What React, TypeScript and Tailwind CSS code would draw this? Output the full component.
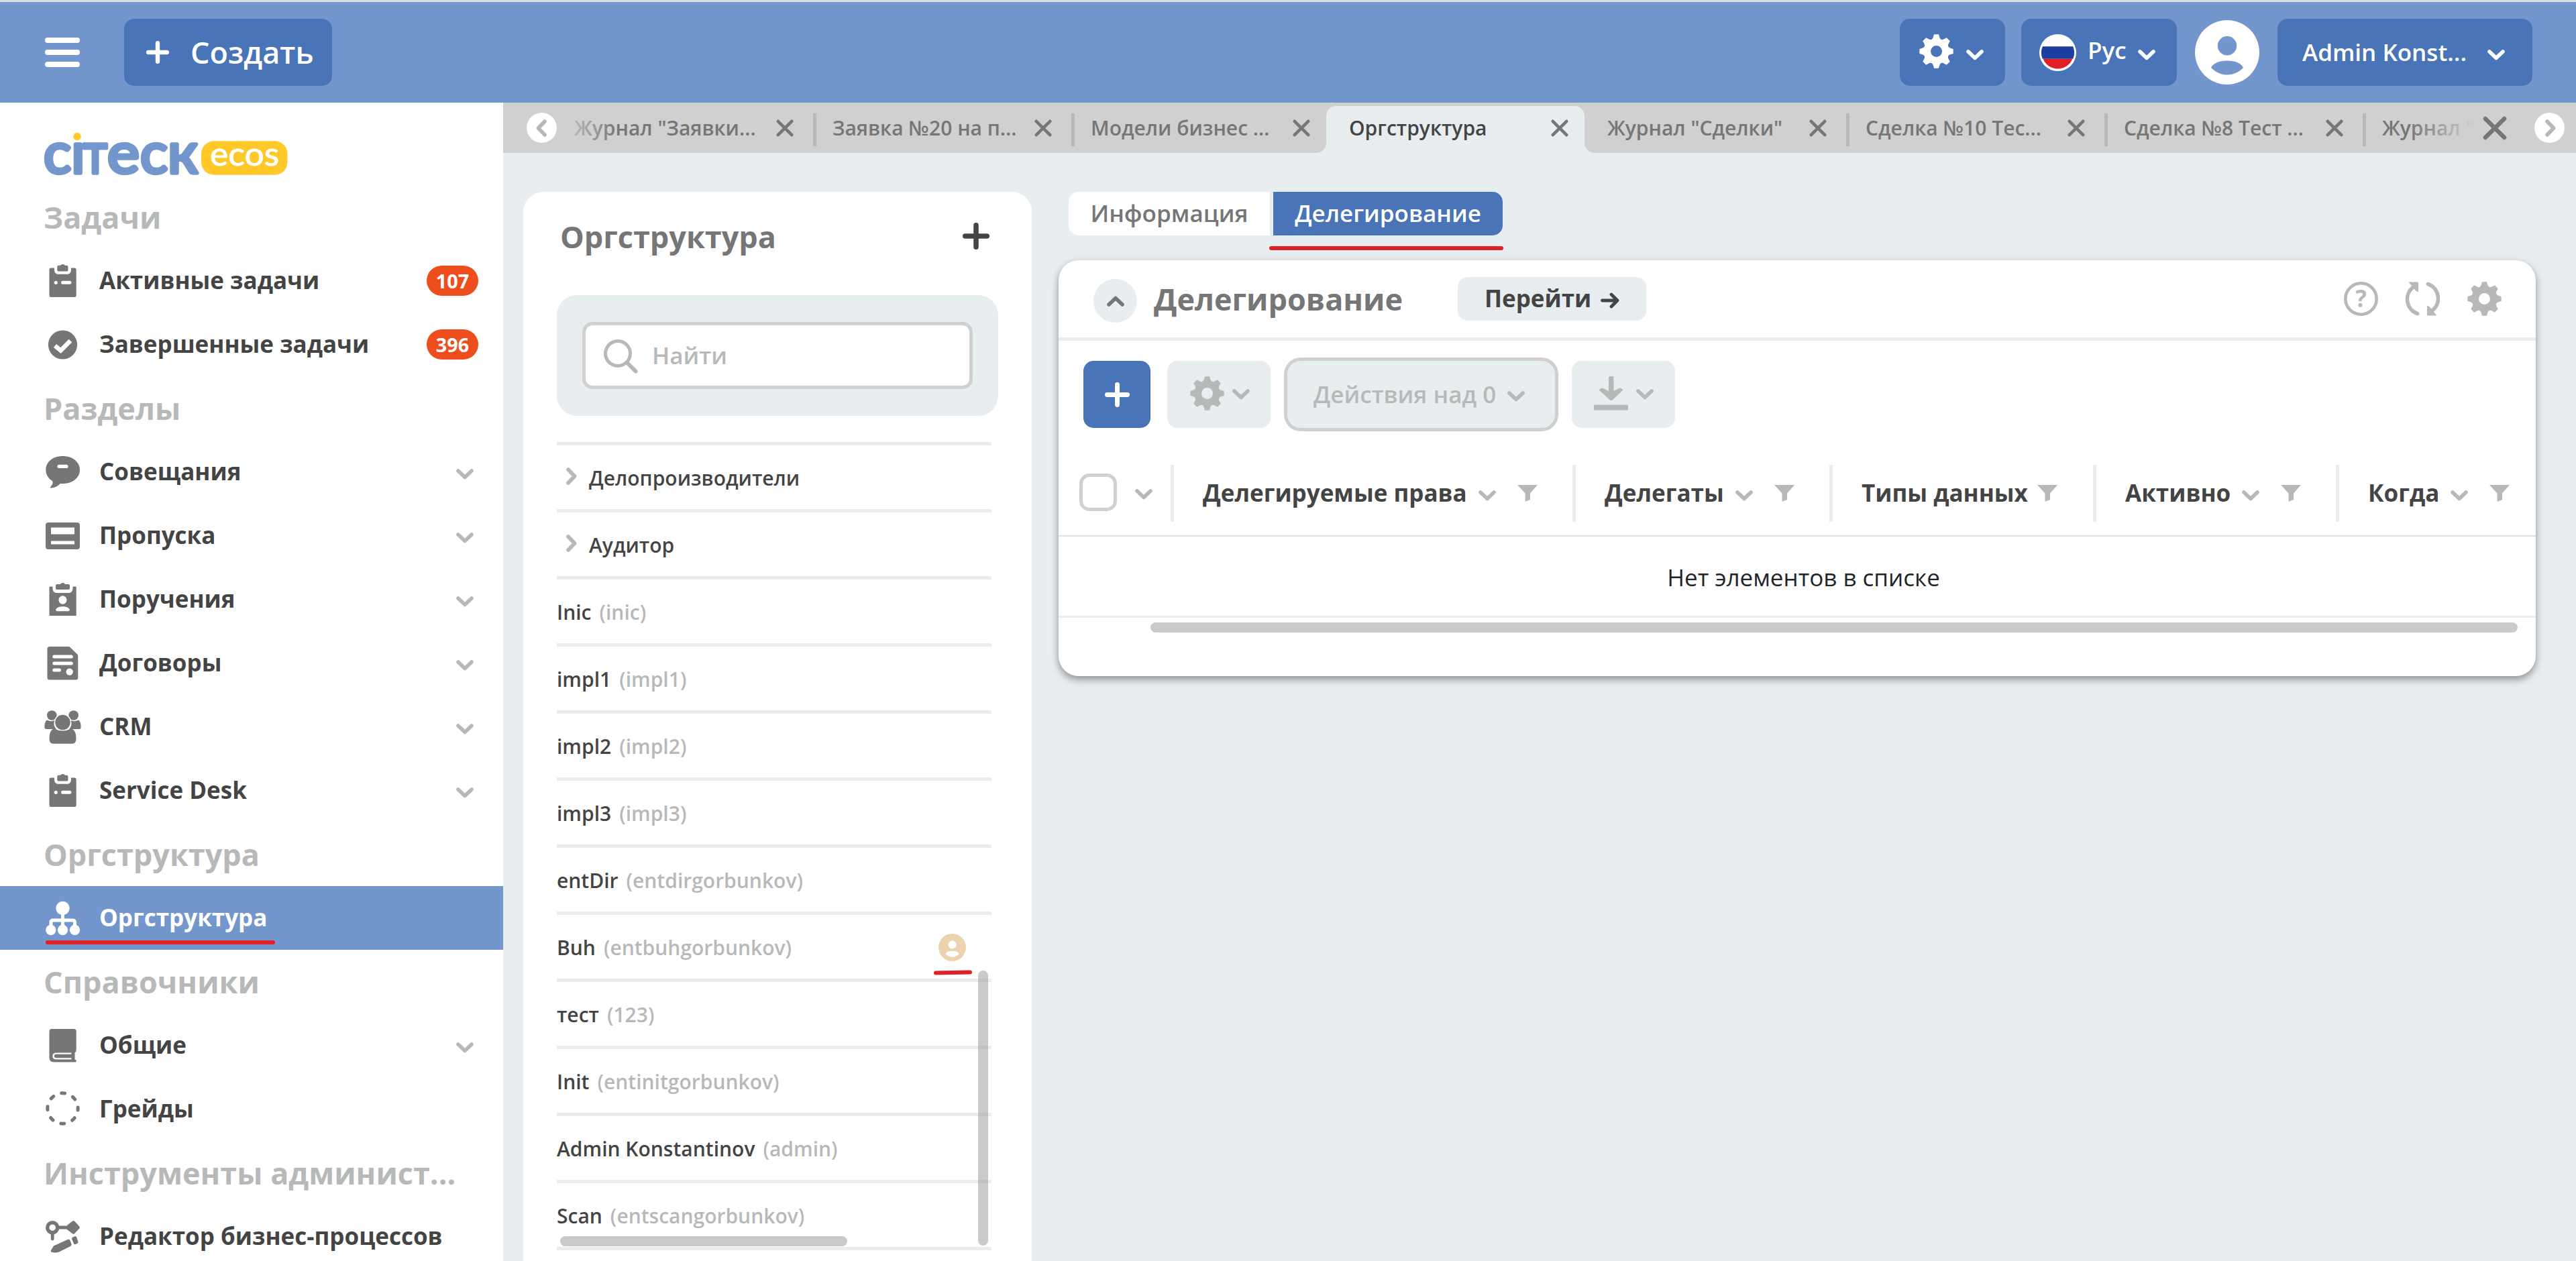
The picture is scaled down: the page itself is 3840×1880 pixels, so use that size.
import React from "react";
import clsx from "clsx";

interface IconProps {
  className?: string;
}

interface MenuEntry {
  title: string;
  icon?: React.FC<IconProps>;
  badge?: number;
  expandable?: boolean;
  active?: boolean;
}

interface Person {
  name: string;
  login?: string;
  delegated?: boolean;
}

interface Column {
  title: string;
  width: string;
  sortable?: boolean;
}

/* ---------- icons ---------- */

const Chevron: React.FC<IconProps> = ({ className }) => (
  <svg viewBox="0 0 26 16" className={clsx("h-[16px] w-[26px] shrink-0", className)} fill="none" stroke="currentColor" strokeWidth="5.6" strokeLinecap="round" strokeLinejoin="round">
    <path d="M3 3 13 12.6 23 3" />
  </svg>
);

const Cross: React.FC<IconProps> = ({ className }) => (
  <svg viewBox="0 0 26 26" className={clsx("shrink-0", className)} fill="none" stroke="currentColor" strokeWidth="4.6" strokeLinecap="round">
    <path d="M2.8 2.8 23.2 23.2M23.2 2.8 2.8 23.2" />
  </svg>
);

const Plus: React.FC<IconProps> = ({ className }) => (
  <svg viewBox="0 0 34 34" className={clsx("shrink-0", className)} fill="none" stroke="currentColor" strokeWidth="6.4" strokeLinecap="round">
    <path d="M17 3.2V30.8M3.2 17H30.8" />
  </svg>
);

// eight teeth, every 45 degrees
const gearPath = (() => {
  const point = (r: number, deg: number) => {
    const a = ((deg - 90) * Math.PI) / 180;
    return `${(25.5 + r * Math.cos(a)).toFixed(2)} ${(25.5 + r * Math.sin(a)).toFixed(2)}`;
  };
  let d = "";
  for (let i = 0; i < 8; i++) {
    const deg = i * 45;
    d += `${i === 0 ? "M" : "L"}${point(22, deg - 12)}L${point(25.4, deg - 8)}L${point(25.4, deg + 8)}L${point(22, deg + 12)}Q${point(16.5, deg + 22.5)} ${point(22, deg + 33)}`;
  }
  return `${d}ZM17 25.5a8.5 8.5 0 1 0 17 0a8.5 8.5 0 1 0-17 0Z`;
})();

const Gear: React.FC<IconProps> = ({ className }) => (
  <svg viewBox="0 0 51 51" className={clsx("size-[51px] shrink-0", className)} fill="currentColor" fillRule="evenodd">
    <path d={gearPath} />
  </svg>
);

const Filter: React.FC<IconProps> = ({ className }) => (
  <svg viewBox="0 0 30 25" className={clsx("h-[25px] w-[30px] shrink-0 text-[#b7b9b9]", className)} fill="currentColor">
    <path d="M0 0H30L19 12.5V22L11.5 25V12.5Z" />
  </svg>
);

const MenuSvg: React.FC<{ children: React.ReactNode }> = ({ children }) => (
  <svg viewBox="0 0 51 50" className="h-[50px] w-[51px] shrink-0 overflow-visible" fill="currentColor">
    {children}
  </svg>
);

const TaskIcon: React.FC<IconProps> = () => (
  <MenuSvg>
    <path d="M8 5.5H13V8C13 12 15 14.8 19 14.8H32C36 14.8 38 12 38 8V5.5H43Q45.7 5.5 45.7 8.5V46Q45.7 49 43 49H8Q5.5 49 5.5 46V8.5Q5.5 5.5 8 5.5Z" />
    <path d="M19 1.8H22Q22.6 0 25.5 0T29 1.8H31Q33.5 1.8 33.5 4V8Q33.5 10.6 31 10.6H20Q17.3 10.6 17.3 8V4Q17.3 1.8 19 1.8Z" />
    <circle cx="15.3" cy="27.3" r="2.6" fill="#fff" />
    <rect x="23" y="24.8" width="15.4" height="5" rx="2.5" fill="#fff" />
  </MenuSvg>
);

const DoneIcon: React.FC<IconProps> = () => (
  <MenuSvg>
    <circle cx="25.5" cy="25" r="21.6" />
    <path d="M14 26.5 22.5 33.5 37 19" fill="none" stroke="#fff" strokeWidth="6.6" />
  </MenuSvg>
);

const MeetingIcon: React.FC<IconProps> = () => (
  <MenuSvg>
    <path d="M25.5 1C40 1 51 9.5 51 21.5S40 42 25.5 42L22 42C17.5 46.5 12 49 7 48.5C6.3 48 7 47.5 8 46C10 43.5 11.5 41 10 38C4 34.5 .3 28.5 .3 21.5C.3 9.5 11 1 25.5 1Z" />
    <rect x="17.5" y="13.8" width="16" height="5.2" rx="2.6" fill="#fff" />
  </MenuSvg>
);

const PassIcon: React.FC<IconProps> = () => (
  <MenuSvg>
    <path fillRule="evenodd" d="M4 5H47Q51 5 51 9V41Q51 45 47 45H4Q0 45 0 41V9Q0 5 4 5ZM8 12.5V22.5H43V12.5ZM8 32.5V37.5H43V32.5Z" />
  </MenuSvg>
);

const OrderIcon: React.FC<IconProps> = () => (
  <MenuSvg>
    <path d="M6 5.5H10.5V8C10.5 12.5 13 15 17 15H34C38 15 40.5 12.5 40.5 8V5.5H45.2L45.7 6V48.5L45.2 49H6L5.5 48.5V6Z" />
    <path d="M17 2H22Q22.6 0 25.5 0T29 2H34Q36 2 36 4V8Q36 10 34 10H17Q15 10 15 8V4Q15 2 17 2Z" />
    <ellipse cx="25.5" cy="25.5" rx="6" ry="6.2" fill="#fff" />
    <path d="M15.2 39.5C17 36.5 21 35.2 25.5 35.2S34 36.5 35.8 39.5Q36 42.2 33.5 42.2H17.5Q15 42.2 15.2 39.5Z" fill="#fff" />
  </MenuSvg>
);

const ContractIcon: React.FC<IconProps> = () => (
  <MenuSvg>
    <path d="M6 0H34.5Q36 0 37 1.5L47.3 11.5Q48.3 12.5 48.3 14V46Q48.3 49.5 45 49.5H6Q2.5 49.5 2.5 46V3.5Q2.5 0 6 0Z" />
    <g fill="#fff">
      <rect x="10.2" y="12.6" width="30.6" height="5" rx="2.5" />
      <rect x="10.2" y="22.6" width="30.6" height="5" rx="2.5" />
      <rect x="10.2" y="32.6" width="12.8" height="5" rx="2.5" />
      <circle cx="35.7" cy="37.6" r="5.2" />
    </g>
  </MenuSvg>
);

const CrmIcon: React.FC<IconProps> = () => (
  <MenuSvg>
    <circle cx="9.3" cy="7.5" r="7.3" />
    <circle cx="41.7" cy="7.5" r="7.3" />
    <path d="M2 14.5Q9 18 14 14.5C11 20 13 25 16 28H1Q-1.8 28-1.6 24Q-1.5 17 2 14.5Z" />
    <path d="M49 14.5Q42 18 37 14.5C40 20 38 25 35 28H50Q52.8 28 52.6 24Q52.5 17 49 14.5Z" />
    <circle cx="25.5" cy="18" r="12" stroke="#fff" strokeWidth="1.5" />
    <path d="M13 27.2Q25.5 34 38 27.2Q45.5 29 45.5 42Q45.5 49.8 40 49.8H11Q5.5 49.8 5.5 42Q5.5 29 13 27.2Z" />
  </MenuSvg>
);

const OrgIcon: React.FC<IconProps> = () => (
  <MenuSvg>
    <circle cx="25.5" cy="10" r="10.2" />
    <path d="M25.5 18V38M8 37V31Q8 28 11 28H40Q43.5 28 43.5 31V37" fill="none" stroke="currentColor" strokeWidth="5" />
    <circle cx="7.8" cy="42.5" r="7.7" />
    <circle cx="25.5" cy="42.5" r="7.7" />
    <circle cx="43.5" cy="42.5" r="7.7" />
  </MenuSvg>
);

const BookIcon: React.FC<IconProps> = () => (
  <MenuSvg>
    <path d="M9.5 0H42Q45.7 0 45.7 3.5V31Q45.7 34 43.5 35.5V46H45Q45.7 46 45.7 47.5T45 49.5H12.5Q5.5 49.5 5.5 42.5V4Q5.5 0 9.5 0Z" />
    <path d="M38.5 36.6H16Q11.6 36.6 11.6 40.5T16 44.4H38.5" fill="none" stroke="#fff" strokeWidth="2.4" />
  </MenuSvg>
);

const DashedIcon: React.FC<IconProps> = () => (
  <MenuSvg>
    <circle cx="25.5" cy="23.5" r="22.7" fill="none" stroke="currentColor" strokeWidth="5" strokeLinecap="round" strokeDasharray="5 12.829" strokeDashoffset="2.5" />
  </MenuSvg>
);

const BpmIcon: React.FC<IconProps> = () => (
  <MenuSvg>
    <circle cx="10.2" cy="11.2" r="7.5" fill="none" stroke="currentColor" strokeWidth="5.4" />
    <path d="M19 11H34M10.2 20V28" fill="none" stroke="currentColor" strokeWidth="4.8" strokeLinecap="round" />
    <path d="M40 1.5Q41.5.5 43 1.5L50.5 9.8Q51.2 11 50.5 12.2L43 20.3Q41.5 21.3 40 20.3L31.8 14V8Z" />
    <path d="M12 38.5 34 28.5Q36 28.5 36.5 30.5L38.7 36Q38.7 38 37 39L20 47.5Q14 49.5 8.5 47.5Q7.2 46.5 8 45Z" />
    <path d="M39.5 26 44 24Q45.8 24 46.2 25.5L48.5 32.5Q48.5 34 47 35L44 36.3Q42.5 36.3 42 35L39 28Z" />
  </MenuSvg>
);

const UserIcon: React.FC<IconProps> = ({ className }) => (
  <svg viewBox="0 0 96 96" className={clsx("shrink-0", className)} fill="currentColor" fillRule="evenodd">
    <path d="M48 0A48 48 0 1 1 48 96A48 48 0 1 1 48 0ZM48 24A14 14 0 1 0 48 52.5A14 14 0 1 0 48 24ZM24 71C30 77 38 81.5 48 81.5S66 77 72 71C69 64 60 60.5 48 60.5S27 64 24 71Z" />
  </svg>
);

const Logo = () => (
  <svg viewBox="0 0 370 70" className="h-[70px] w-[370px] overflow-visible">
    <g fill="#7396cd" stroke="#7396cd" strokeWidth="5.6" strokeLinejoin="round" strokeLinecap="round" className="font-[Lato] text-[86px]">
      <text y="62" x="1" textLength="41" lengthAdjust="spacingAndGlyphs">c</text>
      <text y="62" x="42">ı</text>
      <text y="62" x="60" textLength="36" lengthAdjust="spacingAndGlyphs">т</text>
      <text y="62" x="96" textLength="48" lengthAdjust="spacingAndGlyphs">e</text>
      <text y="62" x="145" textLength="41" lengthAdjust="spacingAndGlyphs">c</text>
      <text y="62" x="186" textLength="45" lengthAdjust="spacingAndGlyphs">к</text>
    </g>
    <circle cx="51" cy="7.5" r="5.7" fill="#ffc929" />
    <rect x="236" y="14.3" width="128.5" height="50.5" rx="19" fill="#ffc929" />
    <text x="249" y="51" textLength="103" lengthAdjust="spacingAndGlyphs" fill="#fff" stroke="#fff" strokeWidth="1" className="font-[Lato] text-[49px]">
      ecos
    </text>
  </svg>
);

/* ---------- data ---------- */

const menu: MenuEntry[] = [
  { title: "Задачи" },
  { title: "Активные задачи", icon: TaskIcon, badge: 107 },
  { title: "Завершенные задачи", icon: DoneIcon, badge: 396 },
  { title: "Разделы" },
  { title: "Совещания", icon: MeetingIcon, expandable: true },
  { title: "Пропуска", icon: PassIcon, expandable: true },
  { title: "Поручения", icon: OrderIcon, expandable: true },
  { title: "Договоры", icon: ContractIcon, expandable: true },
  { title: "CRM", icon: CrmIcon, expandable: true },
  { title: "Service Desk", icon: TaskIcon, expandable: true },
  { title: "Оргструктура" },
  { title: "Оргструктура", icon: OrgIcon, active: true },
  { title: "Справочники" },
  { title: "Общие", icon: BookIcon, expandable: true },
  { title: "Грейды", icon: DashedIcon },
  { title: "Инструменты админист..." },
  { title: "Редактор бизнес-процессов", icon: BpmIcon },
];

const tabs = [
  'Журнал "Заявки...',
  "Заявка №20 на п...",
  "Модели бизнес ...",
  "Оргструктура",
  'Журнал "Сделки"',
  "Сделка №10 Тес...",
  "Сделка №8 Тест ...",
  'Журнал "',
];
const activeTab = 3;

const people: Person[] = [
  { name: "Делопроизводители" },
  { name: "Аудитор" },
  { name: "Inic", login: "inic" },
  { name: "impl1", login: "impl1" },
  { name: "impl2", login: "impl2" },
  { name: "impl3", login: "impl3" },
  { name: "entDir", login: "entdirgorbunkov" },
  { name: "Buh", login: "entbuhgorbunkov", delegated: true },
  { name: "тест", login: "123" },
  { name: "Init", login: "entinitgorbunkov" },
  { name: "Admin Konstantinov", login: "admin" },
  { name: "Scan", login: "entscangorbunkov" },
];

const columns: Column[] = [
  { title: "Делегируемые права", width: "w-[599px]", sortable: true },
  { title: "Делегаты", width: "w-[383px]", sortable: true },
  { title: "Типы данных", width: "w-[393px]" },
  { title: "Активно", width: "w-[362px]", sortable: true },
  { title: "Когда", width: "w-[298px]", sortable: true },
];

/* ---------- page parts ---------- */

const Header = () => (
  <header className="flex h-[153px] items-center border-t-[3px] border-[#d9dddd] bg-[#7396cd] pr-[65px] pl-[67px] text-white">
    <div className="flex h-[44px] w-[52px] flex-col justify-between">
      <span className="h-[8px] rounded-full bg-white" />
      <span className="h-[8px] rounded-full bg-white" />
      <span className="h-[8px] rounded-full bg-white" />
    </div>
    <button className="ml-[66px] flex h-[100px] w-[310px] items-center rounded-[15px] bg-[#4a74b8] pl-[33px] text-[45px] font-semibold">
      <Plus className="size-[34px]" />
      <span className="ml-[32px]">Создать</span>
    </button>

    <button className="ml-auto flex h-[100px] w-[157px] items-center rounded-[15px] bg-[#4a74b8] pl-[29px]">
      <Gear className="-mt-[4px]" />
      <Chevron className="mt-[7px] ml-[19px]" />
    </button>
    <button className="ml-[24px] flex h-[100px] w-[232px] items-center rounded-[15px] bg-[#4a74b8] pl-[27px] text-[35px] font-semibold">
      <svg viewBox="0 0 55 55" className="size-[55px]">
        <circle cx="27.5" cy="27.5" r="27.5" fill="#fff" />
        <path d="M4.8 18.2H50.2A24 24 0 0 1 50.2 36.7H4.8A24 24 0 0 1 4.8 18.2Z" fill="#1c3f9f" />
        <path d="M5.6 36.7H49.4A23.6 23.6 0 0 1 5.6 36.7Z" fill="#e01f26" />
      </svg>
      <span className="-mt-[6px] ml-[17px]">Рус</span>
      <Chevron className="mt-[7px] ml-[17px]" />
    </button>
    <UserIcon className="ml-[27px] size-[96px]" />
    <button className="ml-[27px] flex h-[100px] w-[380px] items-center rounded-[15px] bg-[#4a74b8] pl-[37px] text-[35px] font-semibold">
      <span className="w-[276px] text-left">Admin Konst...</span>
      <Chevron className="mt-[7px]" />
    </button>
  </header>
);

const MenuRow: React.FC<{ entry: MenuEntry }> = ({ entry }) => {
  const { title, icon: Icon, badge, expandable, active } = entry;

  if (!Icon) {
    return (
      <li className="flex h-[95px] items-center pl-[65px] text-[45px] font-bold whitespace-nowrap text-[#b7b9b9]">{title}</li>
    );
  }

  return (
    <li
      className={clsx(
        "relative flex h-[95px] items-center pr-[37px] pl-[68px] text-[35px] font-bold whitespace-nowrap",
        active ? "bg-[#7396cd] text-white" : "text-[#767676]"
      )}
    >
      <Icon />
      <span className={clsx("ml-[29px] flex-1", !active && "text-[#444]")}>{title}</span>
      {badge && (
        <span className="flex h-[45px] w-[77px] items-center justify-center rounded-full bg-[#ee4e1e] text-[28.75px] text-white">
          {badge}
        </span>
      )}
      {expandable && <Chevron className="mt-[6px] mr-[7px] text-[#b7b9b9]" />}
      {active && <span className="absolute bottom-[8px] left-[68px] h-[6px] w-[342px] rounded-full bg-[#e01f26]" />}
    </li>
  );
};

const Sidebar = () => (
  <aside className="w-[750px] shrink-0 overflow-hidden bg-white">
    <div className="h-[123px] pt-[43px] pl-[64px]">
      <Logo />
    </div>
    <ul>
      {menu.map((entry, i) => (
        <MenuRow key={i} entry={entry} />
      ))}
    </ul>
  </aside>
);

const TabsBar = () => (
  <nav className="flex h-[75px] items-center bg-[#d0d0d0] pr-[17px] pl-[35px] text-[30px] font-semibold text-[#767676]">
    <span className="flex size-[45px] shrink-0 items-center justify-center rounded-full bg-white text-[#b7b9b9]">
      <Chevron className="mr-[2px] rotate-90" />
    </span>
    <div className="relative flex h-full w-[2860px] overflow-hidden">
      {tabs.map((title, i) => (
        <div
          key={i}
          className={clsx(
            "relative flex w-[385px] shrink-0 items-center whitespace-nowrap",
            i === 0 && "-ml-[8px]",
            i === activeTab && "mt-[5px] h-[70px] rounded-t-[15px] bg-[#e8edf0] pb-[5px] text-[#444]"
          )}
        >
          <span
            className={clsx(
              "ml-[5px] h-[49px] w-[5px]",
              i !== 0 && i !== activeTab && i !== activeTab + 1 && "mt-[6px] bg-[#b7b9b9]"
            )}
          />
          <span className="ml-[24px] w-[301px]">{title}</span>
          <Cross className="size-[26px] text-[#767676]" />
          {i === activeTab && (
            <>
              <span className="absolute bottom-0 -left-[15px] size-[15px] bg-[#e8edf0]">
                <span className="block size-full rounded-br-[15px] bg-[#d0d0d0]" />
              </span>
              <span className="absolute -right-[15px] bottom-0 z-10 size-[15px] bg-[#e8edf0]">
                <span className="block size-full rounded-bl-[15px] bg-[#d0d0d0]" />
              </span>
            </>
          )}
        </div>
      ))}
      <span className="absolute inset-y-0 left-0 w-[90px] bg-linear-to-r from-[#d0d0d0] to-[#d0d0d0]/0" />
      <span className="absolute inset-y-0 right-0 w-[100px] bg-linear-to-l from-[#d0d0d0] to-[#d0d0d0]/0" />
    </div>
    <Cross className="ml-[11px] size-[36px]" />
    <span className="ml-auto flex size-[45px] shrink-0 items-center justify-center rounded-full bg-white text-[#b7b9b9]">
      <Chevron className="ml-[2px] -rotate-90" />
    </span>
  </nav>
);

const OrgPanel = () => (
  <section className="relative h-[1594px] w-[758px] shrink-0 rounded-t-[30px] bg-white px-[50px] pt-[34px]">
    <div className="flex h-[66px] items-center justify-between pr-[13px] pl-[5px]">
      <h2 className="text-[45px] font-bold text-[#767676]">Оргструктура</h2>
      <Plus className="-mt-[2px] size-[40px] text-[#444]" />
    </div>
    <div className="mt-[54px] h-[180px] rounded-[30px] bg-[#e8edf0] px-[38px] py-[40px]">
      <div className="flex h-[100px] items-center rounded-[15px] border-[5px] border-[#d0d0d0] bg-white pl-[27px] text-[35px] text-[#b7b9b9]">
        <svg viewBox="0 0 51 51" className="mt-[3px] size-[51px]" fill="none" stroke="currentColor" strokeWidth="5" strokeLinecap="round">
          <circle cx="21" cy="21" r="18.5" />
          <path d="M34.5 34.5 47.5 47.5" strokeWidth="6" />
        </svg>
        <span className="ml-[21px] font-semibold">Найти</span>
      </div>
    </div>

    <ul className="mt-[39px] w-[648px] border-t-[5px] border-[#e8edf0] text-[30px] font-semibold text-[#444]">
      {people.map((person) => (
        <li key={person.name} className="flex h-[100px] items-center border-b-[5px] border-[#e8edf0] pt-[2px]">
          {!person.login && <Chevron className="-mt-[5px] mr-[13px] ml-[9px] -rotate-90 text-[#b7b9b9]" />}
          <span>{person.name}</span>
          {person.login && <span className="ml-[12px] text-[#b7b9b9]">({person.login})</span>}
          {person.delegated && (
            <span className="relative mr-[38px] ml-auto">
              <UserIcon className="size-[41px] text-[#ebd3ae]" />
              <span className="absolute -bottom-[20px] -left-[7px] h-[6px] w-[57px] -rotate-1 rounded-full bg-[#e01f26]" />
            </span>
          )}
        </li>
      ))}
    </ul>
    <span className="absolute top-[1161px] right-[65px] h-[410px] w-[15px] rounded-full bg-[#9c9e9d]/55" />
    <span className="absolute top-[1557px] left-[55px] h-[15px] w-[428px] rounded-full bg-[#c9cbca]" />
  </section>
);

const Toolbar = () => (
  <div className="flex h-[160px] items-center pl-[37px] text-[#b7b9b9]">
    <button className="flex size-[100px] items-center justify-center rounded-[15px] bg-[#4a74b8] text-white">
      <Plus className="size-[37px]" />
    </button>
    <button className="ml-[25px] flex h-[100px] w-[154px] items-center rounded-[15px] bg-[#e8edf0] pl-[34px]">
      <Gear className="-mt-[4px]" />
      <Chevron className="ml-[12px]" />
    </button>
    <button className="ml-[20px] flex h-[110px] w-[409px] items-center rounded-[25px] border-[5px] border-[#d0d0d0] bg-[#e8edf0] pl-[39px] text-[35px] font-semibold">
      Действия над 0
      <Chevron className="mt-[6px] ml-[17px]" />
    </button>
    <button className="ml-[20px] flex h-[100px] w-[154px] items-center rounded-[15px] bg-[#e8edf0] pl-[33px]">
      <svg viewBox="0 0 51 51" className="-mt-[3px] size-[51px]" fill="currentColor">
        <path d="M22 2Q22 0 24 0H27.5Q29.5 0 29.5 2V22L38 17.5Q41 17 43.5 20.5L27.5 35.5Q25.5 36.5 24 35.5L7.5 20.5Q10 17 13 17.5L22 22Z" />
        <rect y="42.5" width="51" height="8" rx="1.5" />
      </svg>
      <Chevron className="ml-[12px]" />
    </button>
  </div>
);

const JournalCard = () => (
  <section className="mt-[37px] -ml-[15px] h-[620px] w-[2202px] overflow-hidden rounded-[30px] bg-white shadow-[0_5px_12px_rgba(0,0,0,0.4)]">
    <div className="flex h-[120px] items-center border-b-[5px] border-[#e8edf0] pr-[51px] pl-[52px]">
      <span className="mt-[6px] flex size-[65px] items-center justify-center rounded-full bg-[#e8edf0] text-[#767676]">
        <Chevron className="rotate-180" />
      </span>
      <h2 className="ml-[25px] text-[45px] font-bold text-[#767676]">Делегирование</h2>
      <button className="ml-[82px] flex h-[65px] w-[281px] items-center justify-center rounded-[15px] bg-[#e8edf0] text-[35px] font-bold text-[#444]">
        Перейти
        <svg viewBox="0 0 28 24" className="mt-[5px] ml-[14px] h-[24px] w-[28px]" fill="none" stroke="currentColor" strokeWidth="4.8" strokeLinecap="round" strokeLinejoin="round">
          <path d="M2.5 12H25M16 3 25 12 16 21" />
        </svg>
      </button>
      <div className="ml-auto flex gap-[41px] text-[#b7b9b9]">
        <svg viewBox="0 0 51 51" className="size-[51px] overflow-visible">
          <circle cx="25.5" cy="25.5" r="23.2" fill="none" stroke="currentColor" strokeWidth="4.6" />
          <text x="25.5" y="38" textAnchor="middle" fill="currentColor" className="text-[35px] font-bold">?</text>
        </svg>
        <svg viewBox="0 0 51 51" className="size-[51px]" fill="currentColor">
          <path d="M17.5 47.5A22.8 22.8 0 0 1 12 7.5M33.5 3.5A22.8 22.8 0 0 1 39 43.5" fill="none" stroke="currentColor" strokeWidth="5.6" strokeLinecap="round" />
          <path d="M4.5.5H17.5Q19 .5 19 2V15L15.500 14ZM46.5 50.5H33.5Q32 50.5 32 49V36L35.5 37Z" />
        </svg>
        <Gear />
      </div>
    </div>

    <Toolbar />

    <div className="flex h-[132px] items-center border-b-2 border-[#dee2e6] pt-[5px] pl-[31px] text-[#b7b9b9]">
      <span className="-mt-[4px] size-[56px] shrink-0 rounded-[15px] border-[5px] border-[#d0d0d0]" />
      <Chevron className="mt-[3px] mr-[27px] ml-[27px]" />
      {columns.map((column) => (
        <div key={column.title} className={clsx("flex h-[85px] shrink-0 items-center border-l-[5px] border-[#e8edf0] pl-[43px]", column.width)}>
          <span className="text-[35px] font-bold text-[#444]">{column.title}</span>
          {column.sortable && <Chevron className="mt-[7px] ml-[17px]" />}
          <Filter className={column.sortable ? "ml-[32px]" : "ml-[14px]"} />
        </div>
      ))}
    </div>
    <div className="flex h-[121px] items-center justify-center border-b-[3px] border-[#e8edf0] pt-[4px] pl-[19px] text-[35px] text-[#212529]">
      Нет элементов в списке
    </div>
    <div className="mt-[7px] ml-[137px] h-[15px] w-[2038px] rounded-full bg-[#c9cbca]" />
  </section>
);

const Details = () => (
  <div className="ml-[55px]">
    <div className="relative flex h-[65px] w-[647px] gap-[5px] text-[35px] font-semibold">
      <button className="w-[300px] rounded-l-[15px] bg-white text-[#767676]">Информация</button>
      <button className="w-[342px] rounded-r-[15px] bg-[#4a74b8] text-white">Делегирование</button>
      <span className="absolute -right-[1px] -bottom-[22px] h-[6px] w-[349px] rounded-full bg-[#e01f26]" />
    </div>
    <JournalCard />
  </div>
);

const App: React.FC = () => (
  <div className="flex h-[1880px] w-[3840px] flex-col overflow-hidden bg-[#e8edf0] font-['Open_Sans',sans-serif]">
    <Header />
    <div className="flex min-h-0 flex-1">
      <Sidebar />
      <div className="min-w-0 flex-1">
        <TabsBar />
        <main className="flex pt-[58px] pl-[30px]">
          <OrgPanel />
          <Details />
        </main>
      </div>
    </div>
  </div>
);

export default App;
